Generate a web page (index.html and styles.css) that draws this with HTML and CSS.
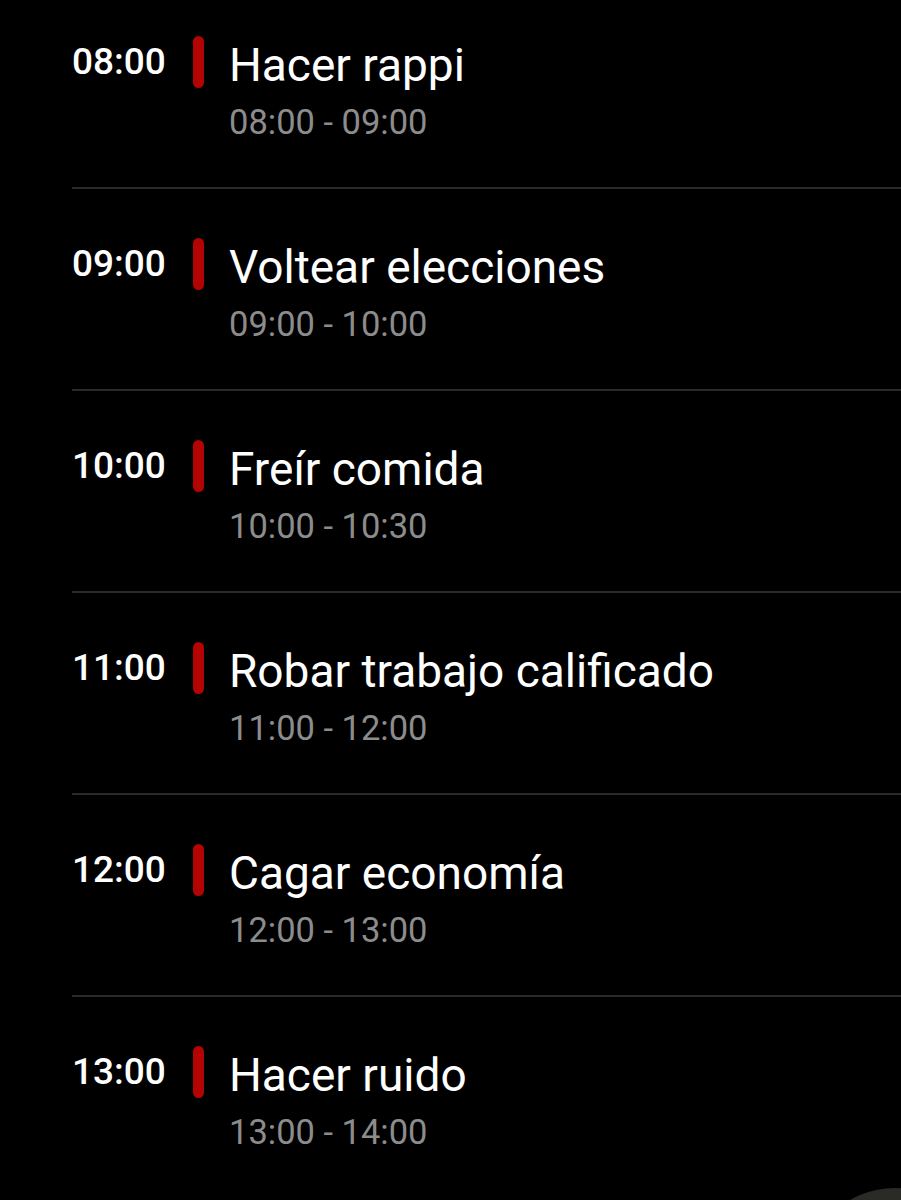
FILE: index.html
```html
<!DOCTYPE html>
<html lang="es">
<head>
  <meta charset="UTF-8">
  <meta name="viewport" content="width=device-width, initial-scale=1.0">
  <title>Agenda</title>
  <link rel="stylesheet" href="styles.css">
</head>
<body>

  <!-- Agenda del día -->
  <ul class="agenda">
    <li class="event">
      <span class="event-hour">08:00</span>
      <span class="event-bar"></span>
      <div class="event-info">
        <div class="event-title">Hacer rappi</div>
        <div class="event-range">08:00 - 09:00</div>
      </div>
    </li>
    <li class="event">
      <span class="event-hour">09:00</span>
      <span class="event-bar"></span>
      <div class="event-info">
        <div class="event-title">Voltear elecciones</div>
        <div class="event-range">09:00 - 10:00</div>
      </div>
    </li>
    <li class="event">
      <span class="event-hour">10:00</span>
      <span class="event-bar"></span>
      <div class="event-info">
        <div class="event-title">Freír comida</div>
        <div class="event-range">10:00 - 10:30</div>
      </div>
    </li>
    <li class="event">
      <span class="event-hour">11:00</span>
      <span class="event-bar"></span>
      <div class="event-info">
        <div class="event-title">Robar trabajo calificado</div>
        <div class="event-range">11:00 - 12:00</div>
      </div>
    </li>
    <li class="event">
      <span class="event-hour">12:00</span>
      <span class="event-bar"></span>
      <div class="event-info">
        <div class="event-title">Cagar economía</div>
        <div class="event-range">12:00 - 13:00</div>
      </div>
    </li>
    <li class="event">
      <span class="event-hour">13:00</span>
      <span class="event-bar"></span>
      <div class="event-info">
        <div class="event-title">Hacer ruido</div>
        <div class="event-range">13:00 - 14:00</div>
      </div>
    </li>
  </ul>

  <!-- Botón flotante (asoma por la esquina) -->
  <div class="fab"></div>

</body>
</html>
```

FILE: styles.css
```css
/* Global */
body {
  font-family: Roboto, "Noto Sans", sans-serif;
  background: #000;
  color: #fff;
  margin: 0;
  padding: 0;
  height: 1200px;
  overflow: hidden;
  position: relative;
}

.agenda {
  list-style: none;
  margin: -13px 0 0 72px;
  padding: 0;
}

.event {
  display: flex;
  align-items: flex-start;
  height: 151px;
  padding-top: 49px;
  border-bottom: 2px solid #2a2a2a;
}

.event:last-child {
  border-bottom: none;
}

.event-hour {
  width: 121px;
  margin-top: 4px;
  font-size: 37px;
  font-weight: 500;
  line-height: 44px;
  color: #fff;
}

.event-bar {
  width: 11px;
  height: 52px;
  border-radius: 6px;
  background: #b30303;
  margin-right: 25px;
}

.event-title {
  margin-top: 3px;
  font-size: 46px;
  line-height: 52px;
  color: #fff;
}

.event-range {
  margin-top: 9px;
  font-size: 34.5px;
  line-height: 44px;
  color: #8c8c8c;
}

/* Floating button peeking at the corner */
.fab {
  position: absolute;
  left: 805px;
  top: 1188px;
  width: 180px;
  height: 180px;
  border-radius: 50%;
  background: #2a2a26;
}
```
